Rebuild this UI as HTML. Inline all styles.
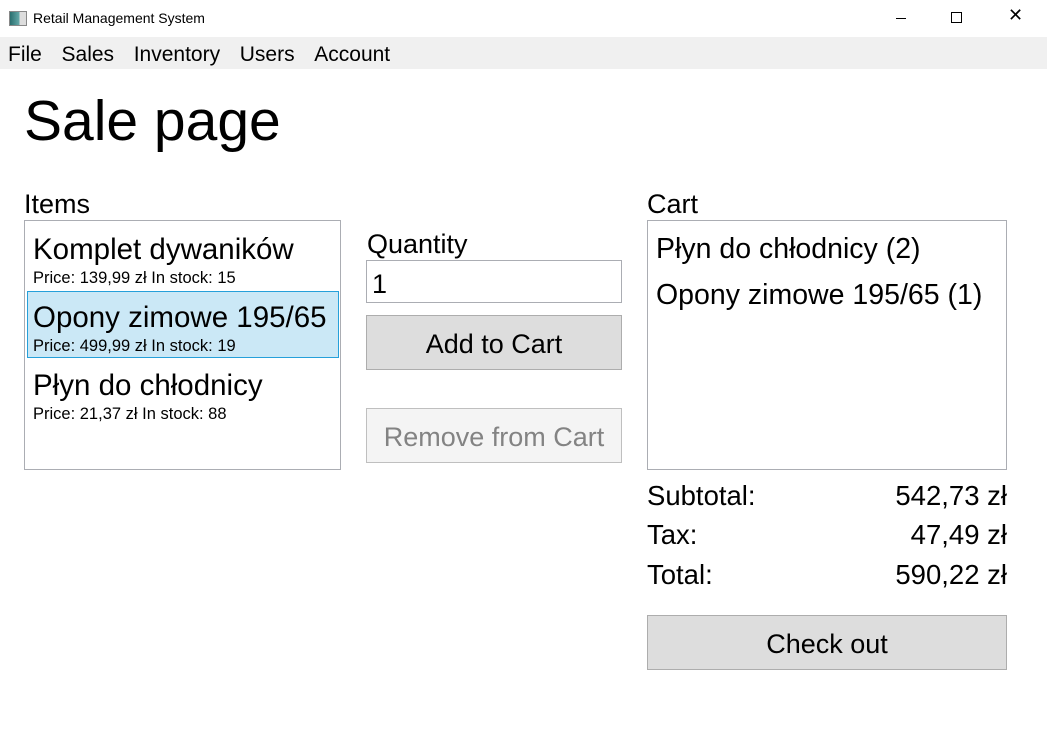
<!DOCTYPE html>
<html><head><meta charset="utf-8"><style>
body{margin:0;width:1047px;height:739px;background:#fff;font-family:"Liberation Sans",sans-serif;position:relative;overflow:hidden;color:#000}
.a{position:absolute;white-space:nowrap}
.box{position:absolute;border:1px solid #abadb3;background:#fff;box-sizing:border-box}
.btn{position:absolute;border:1px solid #adadad;background:#dddddd;box-sizing:border-box;text-align:center;font-size:27px}
</style></head><body>
<div class="a" style="left:9px;top:11px;width:16px;height:13px;background:linear-gradient(90deg,#2a6f6f,#6aa 60%,#ddd 60%);border:1px solid #888"></div>
<div class="a" style="left:33px;top:10px;font-size:14px">Retail Management System</div>
<div class="a" style="left:896px;top:18px;width:10px;height:1px;background:#000"></div>
<div class="a" style="left:951px;top:12px;width:9px;height:9px;border:1px solid #000"></div>
<div class="a" style="left:1008px;top:5px;font-size:18px">✕</div>
<div class="a" style="left:0;top:37px;width:1047px;height:32px;background:#f0f0f0"></div>
<div class="a" style="left:8px;top:43px;font-size:21px;word-spacing:4px">File &nbsp;Sales &nbsp;Inventory &nbsp;Users &nbsp;Account</div>
<div class="a" style="left:24px;top:88px;font-size:57px">Sale page</div>
<div class="a" style="left:24px;top:189px;font-size:27px">Items</div>
<div class="box" style="left:24px;top:220px;width:317px;height:250px"></div>
<div class="a" style="left:27px;top:291px;width:312px;height:67px;background:#cbe8f6;border:1px solid #26a0da;box-sizing:border-box"></div>
<div class="a" style="left:33px;top:233px;font-size:29.5px">Komplet dywaników</div>
<div class="a" style="left:33px;top:269px;font-size:16.5px">Price: 139,99 zł In stock: 15</div>
<div class="a" style="left:33px;top:301px;font-size:29.5px">Opony zimowe 195/65</div>
<div class="a" style="left:33px;top:337px;font-size:16.5px">Price: 499,99 zł In stock: 19</div>
<div class="a" style="left:33px;top:369px;font-size:29.5px">Płyn do chłodnicy</div>
<div class="a" style="left:33px;top:405px;font-size:16.5px">Price: 21,37 zł In stock: 88</div>
<div class="a" style="left:367px;top:229px;font-size:27px">Quantity</div>
<div class="box" style="left:366px;top:260px;width:256px;height:43px"></div>
<div class="a" style="left:372px;top:269px;font-size:27px">1</div>
<div class="btn" style="left:366px;top:315px;width:256px;height:55px;line-height:57px">Add to Cart</div>
<div class="btn" style="left:366px;top:408px;width:256px;height:55px;line-height:57px;background:#f4f4f4;border-color:#bfbfbf;color:#838383">Remove from Cart</div>
<div class="a" style="left:647px;top:189px;font-size:27px">Cart</div>
<div class="box" style="left:647px;top:220px;width:360px;height:250px"></div>
<div class="a" style="left:656px;top:233px;font-size:28.5px">Płyn do chłodnicy (2)</div>
<div class="a" style="left:656px;top:279px;font-size:28.5px">Opony zimowe 195/65 (1)</div>
<div class="a" style="left:647px;top:480px;font-size:27.5px">Subtotal:</div>
<div class="a" style="right:40px;top:480px;font-size:27.5px">542,73 zł</div>
<div class="a" style="left:647px;top:519px;font-size:27.5px">Tax:</div>
<div class="a" style="right:40px;top:519px;font-size:27.5px">47,49 zł</div>
<div class="a" style="left:647px;top:559px;font-size:27.5px">Total:</div>
<div class="a" style="right:40px;top:559px;font-size:27.5px">590,22 zł</div>
<div class="btn" style="left:647px;top:615px;width:360px;height:55px;line-height:57px">Check out</div>
</body></html>
